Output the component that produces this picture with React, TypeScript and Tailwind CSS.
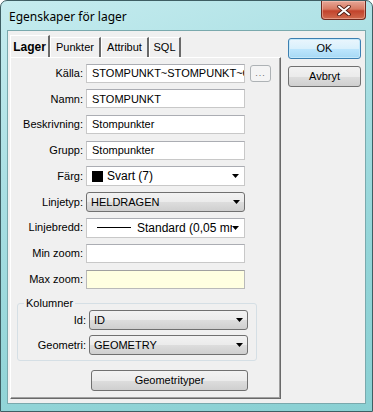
import React from "react";

const Arrow = () => (
  <svg width="7" height="4" viewBox="0 0 7 4" className="shrink-0">
    <path d="M0 0h7L3.5 4z" fill="#000" />
  </svg>
);

const Label: React.FC<{ text: string; w?: string }> = ({ text, w = "w-[75px]" }) => (
  <div className={`${w} shrink-0 text-right pr-[3px] text-[11px] text-black`}>{text}</div>
);

const TextBox: React.FC<{ value?: string; yellow?: boolean }> = ({ value = "", yellow }) => (
  <div
    className={
      yellow
        ? "h-[19px] w-[159px] border border-[#b9b9b9] border-t-[#a0a0a0] bg-[#ffffe1] pl-[5px] flex items-center text-[11px] overflow-hidden whitespace-nowrap"
        : "h-[19px] w-[159px] border border-[#c8c8c8] border-t-[#abadb3] bg-white pl-[5px] flex items-center text-[11px] overflow-hidden whitespace-nowrap"
    }
  >
    {value}
  </div>
);

const WhiteCombo: React.FC<{ children: React.ReactNode }> = ({ children }) => (
  <div className="h-[20px] w-[159px] border border-[#c8c8c8] border-t-[#abadb3] bg-white flex items-center pr-[5px] text-[11px]">
    <div className="flex-1 flex items-center overflow-hidden whitespace-nowrap">{children}</div>
    <Arrow />
  </div>
);

const GrayCombo: React.FC<{ value: string }> = ({ value }) => (
  <div className="h-[20px] w-[159px] rounded-[3px] border border-[#707070] bg-[linear-gradient(#f2f2f2_0%,#ebebeb_50%,#dddddd_51%,#cfcfcf_100%)] flex items-center pl-[4px] pr-[4px] text-[11px]">
    <div className="flex-1 overflow-hidden whitespace-nowrap">{value}</div>
    <Arrow />
  </div>
);

const Row: React.FC<{ label: string; children: React.ReactNode }> = ({ label, children }) => (
  <div className="h-[20px] flex items-center">
    <Label text={label} />
    {children}
  </div>
);

const tabs = [
  { name: "Lager", w: "w-[40px]", active: true },
  { name: "Punkter", w: "w-[51px]" },
  { name: "Attribut", w: "w-[48px]" },
  { name: "SQL", w: "w-[32px]" },
];

export default function App() {
  return (
    <div className="w-[373px] h-[412px] font-['Liberation_Sans',Arial,sans-serif] bg-white">
      <div className="w-[373px] h-[412px] flex flex-col rounded-t-[7px] border border-[#3e5e63] bg-[linear-gradient(160deg,#c6ecef_0%,#a9dfe3_35%,#93d5d8_70%,#8ad0d3_100%)]">
        {/* title bar */}
        <div className="h-[29px] flex items-start justify-between shrink-0">
          <div className="pl-[8px] pt-[7px] text-[12px] text-black font-['Noto_Sans',sans-serif]">
            Egenskaper för lager
          </div>
          <div className="mr-[6px] w-[45px] h-[19px] rounded-b-[4px] border border-t-0 border-[#6e2a1f] bg-[linear-gradient(#e6a797_0%,#d77a63_45%,#c2432c_55%,#cf6a4e_100%)] shadow-[inset_0_0_0_1px_rgba(255,210,200,0.45)] flex items-center justify-center">
            <svg width="14" height="11" viewBox="0 0 14 11">
              <path d="M2 1.5 L12 9.5 M12 1.5 L2 9.5" stroke="#4a1a12" strokeWidth="3.6" strokeLinecap="round" />
              <path d="M2 1.5 L12 9.5 M12 1.5 L2 9.5" stroke="#ffffff" strokeWidth="2" strokeLinecap="round" />
            </svg>
          </div>
        </div>

        {/* client area */}
        <div className="flex-1 mx-[6px] mb-[7px] border border-[#7aa9ad] bg-[#f0f0f0] flex pl-[2px] pt-[4px]">
          {/* tab control */}
          <div className="w-[271px] flex flex-col">
            <div className="h-[22px] flex items-end">
              {tabs.map((t) => (
                <div
                  key={t.name}
                  className={
                    t.active
                      ? `${t.w} h-[22px] flex items-center justify-center border-l border-t border-white border-r-2 border-r-[#696969] font-bold text-[12px] text-black`
                      : `${t.w} h-[20px] flex items-center justify-center border-l border-t border-white border-r-2 border-r-[#696969] text-[11px] text-black`
                  }
                >
                  {t.name}
                </div>
              ))}
            </div>
            <div className="h-[342px] border-l border-t border-white border-r border-b border-r-[#696969] border-b-[#696969] shadow-[inset_-1px_-1px_0_#a0a0a0] flex flex-col pt-[5px]">
              <div className="flex flex-col gap-[5.75px]">
                <Row label="Källa:">
                  <TextBox value="STOMPUNKT~STOMPUNKT~GEOMETRY" />
                  <div className="ml-[5px] w-[21px] h-[17px] rounded-[3px] border border-[#adb2b5] bg-[#f4f4f4] flex items-center justify-center overflow-hidden">
                    <span className="text-[9px] leading-[9px] text-[#6d6d6d] tracking-[1px]">...</span>
                  </div>
                </Row>
                <Row label="Namn:">
                  <TextBox value="STOMPUNKT" />
                </Row>
                <Row label="Beskrivning:">
                  <TextBox value="Stompunkter" />
                </Row>
                <Row label="Grupp:">
                  <TextBox value="Stompunkter" />
                </Row>
                <Row label="Färg:">
                  <WhiteCombo>
                    <div className="ml-[5px] w-[11px] h-[11px] bg-black shrink-0" />
                    <span className="ml-[4px] text-[12px]">Svart (7)</span>
                  </WhiteCombo>
                </Row>
                <Row label="Linjetyp:">
                  <GrayCombo value="HELDRAGEN" />
                </Row>
                <Row label="Linjebredd:">
                  <WhiteCombo>
                    <div className="ml-[10px] w-[34px] h-px bg-black shrink-0" />
                    <span className="ml-[6px] text-[12px]">Standard (0,05 mm)</span>
                  </WhiteCombo>
                </Row>
                <Row label="Min zoom:">
                  <TextBox />
                </Row>
                <Row label="Max zoom:">
                  <TextBox yellow />
                </Row>
              </div>

              <fieldset className="mt-[8px] ml-[6px] w-[240px] rounded-[3px] border border-[#d5dfe5] pb-[5px]">
                <legend className="ml-[6px] px-[2px] text-[11px] leading-[13px] text-black">Kolumner</legend>
                <div className="flex flex-col gap-[5px]">
                  <div className="h-[20px] flex items-center">
                    <Label text="Id:" w="w-[71px]" />
                    <GrayCombo value="ID" />
                  </div>
                  <div className="h-[20px] flex items-center">
                    <Label text="Geometri:" w="w-[71px]" />
                    <GrayCombo value="GEOMETRY" />
                  </div>
                </div>
              </fieldset>

              <div className="mt-[9px] ml-[80px] w-[157px] h-[21px] rounded-[3px] border border-[#707070] bg-[linear-gradient(#f2f2f2_0%,#ebebeb_50%,#dddddd_51%,#cfcfcf_100%)] flex items-center justify-center text-[11px] text-black">
                Geometrityper
              </div>
            </div>
          </div>

          {/* buttons */}
          <div className="ml-[7px] mt-[3px] flex flex-col gap-[7px]">
            <div className="w-[73px] h-[21px] rounded-[3px] border border-[#3c7fb1] bg-[linear-gradient(#eaf6fd_0%,#d9f0fc_50%,#bee6fd_51%,#a7d9f5_100%)] shadow-[inset_0_0_0_1px_#c4e8fa] flex items-center justify-center text-[11px] text-black">
              OK
            </div>
            <div className="w-[73px] h-[21px] rounded-[3px] border border-[#707070] bg-[linear-gradient(#f2f2f2_0%,#ebebeb_50%,#dddddd_51%,#cfcfcf_100%)] flex items-center justify-center text-[11px] text-black">
              Avbryt
            </div>
          </div>
        </div>
      </div>
    </div>
  );
}
